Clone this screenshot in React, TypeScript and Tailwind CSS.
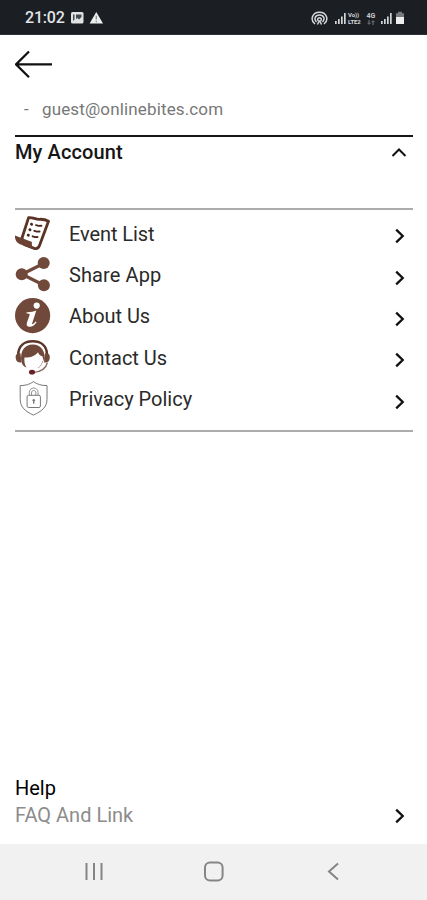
import type { ReactNode } from 'react';

type MenuItem = {
  label: string;
  icon: ReactNode;
  className: string;
};

function EventIcon() {
  return (
    <svg width="38" height="36" viewBox="0 0 38 36" fill="none">
      <path
        d="M13.6 1.6C17.5 1 20.5 3.5 24.5 3.3S31 3.8 33.5 5.2L24.5 29.6C23.6 32 21.8 33 19.3 32.4L9.5 28.8 7 22 13.6 1.6Z"
        fill="#fff"
        stroke="#5b3425"
        strokeWidth="2.8"
        strokeLinejoin="round"
      />
      <path d="M0 19.5L17 25.9C16.2 29 17.5 32 20.5 33.8L5 28.3C1.5 26.8 -.3 24 0 19.5Z" fill="#6b4133" />
      <path d="M16.4 8.2l.3.1M14.8 13.7l.3.1M13.1 19.1l.3.1" stroke="#4a291d" strokeWidth="2.8" strokeLinecap="round" />
      <path
        d="M21 9.1l2.5.8 2.9-.2M19.3 14.8l2.5.8 2.8-.1M17.6 20.3l2.3.8 2.6-.1"
        stroke="#4a291d"
        strokeWidth="1.9"
        strokeLinecap="round"
      />
    </svg>
  );
}

function ShareIcon() {
  return (
    <svg width="38" height="36" viewBox="0 0 38 36" fill="#71493b">
      <path d="M29 6.3L7 17.3l22 11" fill="none" stroke="#71493b" strokeWidth="3.2" />
      <circle cx="28.7" cy="6.1" r="6" />
      <circle cx="6.7" cy="17.3" r="6" />
      <circle cx="28.9" cy="28.3" r="6" />
    </svg>
  );
}

function InfoIcon() {
  return (
    <svg width="38" height="36" viewBox="0 0 38 36">
      <circle cx="17.6" cy="17.6" r="17.6" fill="#71493b" />
      <circle cx="21.7" cy="7.6" r="3.1" fill="#fff" />
      <path
        d="M11.6 14.2C15 14.5 18 13.6 21.3 12.5L17.1 25.4C16.8 26.8 18.2 26.2 20.6 23.5L21.6 24.2C19 28 16.5 29.2 13.6 28.7 11.5 28.2 11.3 26.5 12 24.5L14.7 16.8C15 15.7 13.5 15.4 11.5 15.4Z"
        fill="#fff"
      />
    </svg>
  );
}

function ContactIcon() {
  return (
    <svg width="38" height="36" viewBox="0 0 38 36" fill="none">
      <path d="M3.2 14C3.8 5.5 9.8 1.3 17.7 1.3S31.5 5.5 32 14" stroke="#5d3528" strokeWidth="2.5" />
      <path
        d="M6.5 22C4.5 11 9.5 4.4 17.8 4.4S31.1 11 29.5 22C28.5 21 28 18.5 27.4 16.3 25 15.7 23.8 14.2 23 12.2 20.3 16 15 17.8 9.4 17.6 9.3 21 9.3 25 11.5 27.6 8.7 26.7 7.3 25 6.5 22Z"
        fill="#71493b"
      />
      <path d="M5.5 13.3C1 13.2.4 15.5.8 18.5s2 4.2 5.6 3.9ZM30 13.3C34.5 13.2 35.1 15.5 34.7 18.5s-2 4.2-5.6 3.9Z" fill="#71493b" />
      <path d="M32.4 22.5C31 29 26 32 17.5 32.7" stroke="#85695f" strokeWidth="1.3" />
      <path d="M27.8 21c-.8 3-2.3 5.5-4.8 7" stroke="#a28b82" strokeWidth=".8" />
      <ellipse cx="17" cy="32.2" rx="3" ry="2.4" fill="#641f27" />
    </svg>
  );
}

function PrivacyIcon() {
  return (
    <svg width="38" height="36" viewBox="0 0 38 36" fill="none" stroke="#777" strokeWidth="1">
      <path
        d="M18.4.6C15 3.3 10.5 4.6 5.2 4.6V18.4c0 7.8 5.3 12 13.2 15.7 8-3.7 13.6-7.9 13.6-15.7V4.6C26.5 4.6 22 3.3 18.4.6Z"
        strokeLinejoin="round"
      />
      <rect x="12.1" y="14.3" width="13.3" height="12.2" rx="1.5" />
      <path d="M14.3 14v-2.2c0-6.4 8.8-6.4 8.8 0V14M16.5 14v-2c0-3.5 4.4-3.5 4.4 0V14" strokeWidth=".8" />
      <path d="M18.7 19.3v3.5" strokeWidth="1.3" />
      <circle cx="18.7" cy="19.3" r=".9" fill="#777" />
    </svg>
  );
}

const items: MenuItem[] = [
  { label: 'Event List', icon: <EventIcon />, className: 'tracking-[-0.1px]' },
  { label: 'Share App', icon: <ShareIcon />, className: 'tracking-[0.1px]' },
  { label: 'About Us', icon: <InfoIcon />, className: 'tracking-[-0.05px]' },
  { label: 'Contact Us', icon: <ContactIcon />, className: 'tracking-[0px]' },
  { label: 'Privacy Policy', icon: <PrivacyIcon />, className: 'tracking-[0px]' },
];

function Chevron() {
  return (
    <svg width="12" height="16" viewBox="0 0 12 16" fill="none" stroke="#111" strokeWidth="2.3">
      <path d="M2.2 1.7L8.7 8l-6.5 6.3" />
    </svg>
  );
}

function Signal() {
  return (
    <svg width="13" height="13" viewBox="0 0 13 13" fill="#d2d5d7">
      <path d="M1 9h1.7v3H1zM4 7h1.7v5H4zM7 4.5h1.7V12H7zM10 1h1.7v11H10z" />
    </svg>
  );
}

function StatusBar() {
  return (
    <header className="flex h-[35px] items-center border-b border-[#302f37] bg-[#1b1f24] pt-[2px] pr-[22px] pl-[25px] text-[#e3e5e6]">
      <span className="text-[16px] leading-none font-medium tracking-[-0.2px]">21:02</span>
      <svg className="ml-[6px]" width="33" height="14" viewBox="0 0 33 14">
        <rect x="0" y="1" width="12.5" height="11.5" rx="1.5" fill="#e0e2e3" />
        <path d="M2 3.5h1.5v5L2 10zM5 3.5h5.5V6L8 8.5 6.5 7 5 8z" fill="#454a4e" />
        <path d="M25.3 1L32 12.6H18.6z" fill="#edeeee" />
        <path d="M25.3 4.8v3.7M25.3 9.8v1.5" stroke="#888" strokeWidth="1.3" />
      </svg>
      <div className="ml-auto flex items-center">
        <svg className="mr-[6px]" width="17" height="15" viewBox="0 0 17 15" fill="none" stroke="#d5d8da" strokeWidth="1.5">
          <path d="M4 13C-1 9.5.8 1.2 8.5 1.2S18 9.5 13 13M5.5 11C2.5 8 4.2 4 8.5 4s6 4 3 7M7.5 10c-1.5-1.5-.7-3.2 1-3.2s2.5 1.7 1 3.2" />
          <path d="M8.5 9.5l-2 4M8.5 9.5l2 4" />
        </svg>
        <Signal />
        <div className="ml-px flex w-[14px] flex-col text-[6px] leading-[7px] font-bold tracking-[-0.1px] text-[#d5d8da]">
          <span>Vo))</span>
          <span>LTE2</span>
        </div>
        <div className="ml-[3px] flex w-[12px] flex-col items-center text-[7px] leading-[8px] font-bold text-[#c5c8ca]">
          <span>4G</span>
          <svg width="8" height="5" viewBox="0 0 8 5" fill="none" stroke="#777c80">
            <path d="M2 0v4M.5 2.8L2 4.3l1.5-1.5M6 5V1M4.5 2.2L6 .7l1.5 1.5" />
          </svg>
        </div>
        <div className="ml-[3px]">
          <Signal />
        </div>
        <svg className="ml-[2px]" width="10" height="14" viewBox="0 0 10 14">
          <path d="M3 .8h4v1.5H3zM1 2.3h8v4H1z" fill="#777b7e" />
          <path d="M1 6h8v7H1z" fill="#eee" />
        </svg>
      </div>
    </header>
  );
}

export default function App() {
  return (
    <div className="flex h-[900px] w-[427px] flex-col overflow-hidden bg-white font-[Roboto,sans-serif] text-black">
      <StatusBar />

      <main className="flex flex-1 flex-col pr-[14px] pl-[15px]">
        <button aria-label="Back" className="mt-[14px] h-[31px] w-[40px]">
          <svg width="40" height="31" viewBox="0 0 40 31" fill="none" stroke="#111" strokeWidth="2.2">
            <path d="M37 15.4H1M14 2.5L1 15.4 14 28.3" />
          </svg>
        </button>

        <div className="mt-[19px] flex h-[22px] items-center text-[17px] text-[#777]">
          <span className="ml-[9px] w-[18px]">-</span>
          <span className="tracking-[0.14px]">guest@onlinebites.com</span>
        </div>

        <section className="mt-[14px] flex h-[73px] items-start justify-between border-t-2 border-[#161616] pt-[2px]">
          <h1 className="text-[20px] leading-[26px] font-medium tracking-[0.1px] text-[#161616]">My Account</h1>
          <svg className="mt-[8px] mr-[6px]" width="16" height="11" viewBox="0 0 16 11" fill="none" stroke="#111" strokeWidth="2">
            <path d="M1.5 9L8 2.5 14.5 9" />
          </svg>
        </section>

        <ul className="h-[224px] border-y-2 border-[#acacac] pt-[3px]">
          {items.map((item) => (
            <li key={item.label} className="flex h-[41.4px] items-center">
              <div className="w-[54px]">{item.icon}</div>
              <span className={`text-[20px] leading-[26px] text-[#2a2a2a] ${item.className}`}>{item.label}</span>
              <div className="mt-[5px] mr-[7px] ml-auto">
                <Chevron />
              </div>
            </li>
          ))}
        </ul>

        <footer className="mt-auto mb-[15px]">
          <h2 className="text-[20px] leading-[27px]">Help</h2>
          <div className="flex items-center justify-between">
            <span className="text-[20px] leading-[27px] text-[#8c8c8c]">FAQ And Link</span>
            <div className="mr-[7px]">
              <Chevron />
            </div>
          </div>
        </footer>
      </main>

      <nav className="flex h-[56px] items-center justify-between bg-[#f1f1f1] pr-[85px] pl-[84px]">
        <svg width="20" height="20" viewBox="0 0 20 20" stroke="#858585" strokeWidth="2">
          <path d="M2.5 1v17M10 1v17M17.5 1v17" />
        </svg>
        <svg className="mr-[3px]" width="22" height="22" viewBox="0 0 22 22" fill="none" stroke="#858585" strokeWidth="2">
          <rect x="2" y="1.5" width="17.6" height="18" rx="5" />
        </svg>
        <svg width="16" height="20" viewBox="0 0 16 20" fill="none" stroke="#858585" strokeWidth="2">
          <path d="M12 1.5L3 9.5l9 8" />
        </svg>
      </nav>
    </div>
  );
}
